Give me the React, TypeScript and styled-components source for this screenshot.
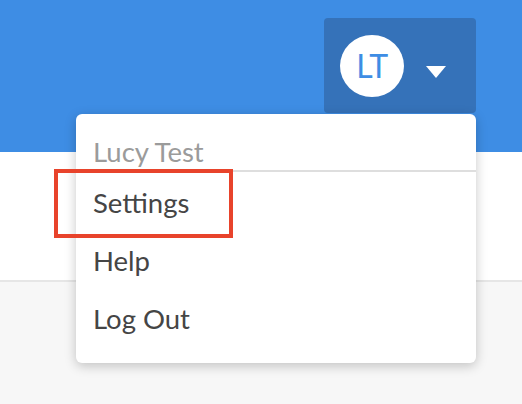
import React from 'react';
import styled, { createGlobalStyle } from 'styled-components';

const GlobalStyle = createGlobalStyle`
  html, body {
    margin: 0;
    padding: 0;
    background: #f7f7f7;
    font-family: Lato, "Open Sans", sans-serif;
  }
`;

const Page = styled.div`
  position: relative;
  width: 522px;
  height: 404px;
  overflow: hidden;
  background: #f7f7f7;
`;

const Header = styled.header`
  height: 152px;
  background: #3e8de4;
  display: flex;
  justify-content: flex-end;
  align-items: flex-start;
  padding: 18px 46px 0 0;
  box-sizing: border-box;
`;

const UserButton = styled.button`
  width: 152px;
  height: 95px;
  border: none;
  border-radius: 4px;
  background: #3572b9;
  display: flex;
  align-items: center;
  padding: 0 0 0 16px;
  gap: 22px;
  cursor: pointer;
`;

const Avatar = styled.div`
  width: 64px;
  height: 62px;
  border-radius: 50%;
  background: #fff;
  color: #3e8de4;
  display: flex;
  align-items: center;
  justify-content: center;
  font-family: Lato, sans-serif;
  font-size: 32px;
  letter-spacing: -0.5px;
`;

const Caret = styled.span`
  width: 0;
  height: 0;
  margin-top: 12px;
  border-left: 10px solid transparent;
  border-right: 10px solid transparent;
  border-top: 12px solid #fff;
`;

const Band = styled.div`
  height: 128px;
  background: #fff;
  border-bottom: 2px solid #e6e6e6;
`;

const Menu = styled.div`
  position: absolute;
  left: 76px;
  top: 114px;
  width: 400px;
  height: 249px;
  background: #fff;
  border-radius: 6px;
  box-shadow: 0 3px 12px rgba(0, 0, 0, 0.22);
  display: flex;
  flex-direction: column;
`;

const MenuHeader = styled.div`
  padding: 22px 17px 0;
  height: 58px;
  box-sizing: border-box;
  border-bottom: 2px solid #dedede;
  color: #9b9b9b;
  font-size: 27.5px;
  line-height: 32px;
`;

const MenuItem = styled.div`
  padding: 3px 17px 0;
  height: 58px;
  box-sizing: border-box;
  display: flex;
  align-items: center;
  color: #454545;
  font-size: 27.5px;
  cursor: pointer;
`;

const Highlight = styled.div`
  position: absolute;
  left: 54px;
  top: 169px;
  width: 179px;
  height: 69px;
  box-sizing: border-box;
  border: 4px solid #e8432b;
`;

export default function App() {
  return (
    <Page>
      <GlobalStyle />
      <Header>
        <UserButton>
          <Avatar>LT</Avatar>
          <Caret />
        </UserButton>
      </Header>
      <Band />
      <Menu>
        <MenuHeader>Lucy Test</MenuHeader>
        <MenuItem>Settings</MenuItem>
        <MenuItem>Help</MenuItem>
        <MenuItem>Log Out</MenuItem>
      </Menu>
      <Highlight />
    </Page>
  );
}
